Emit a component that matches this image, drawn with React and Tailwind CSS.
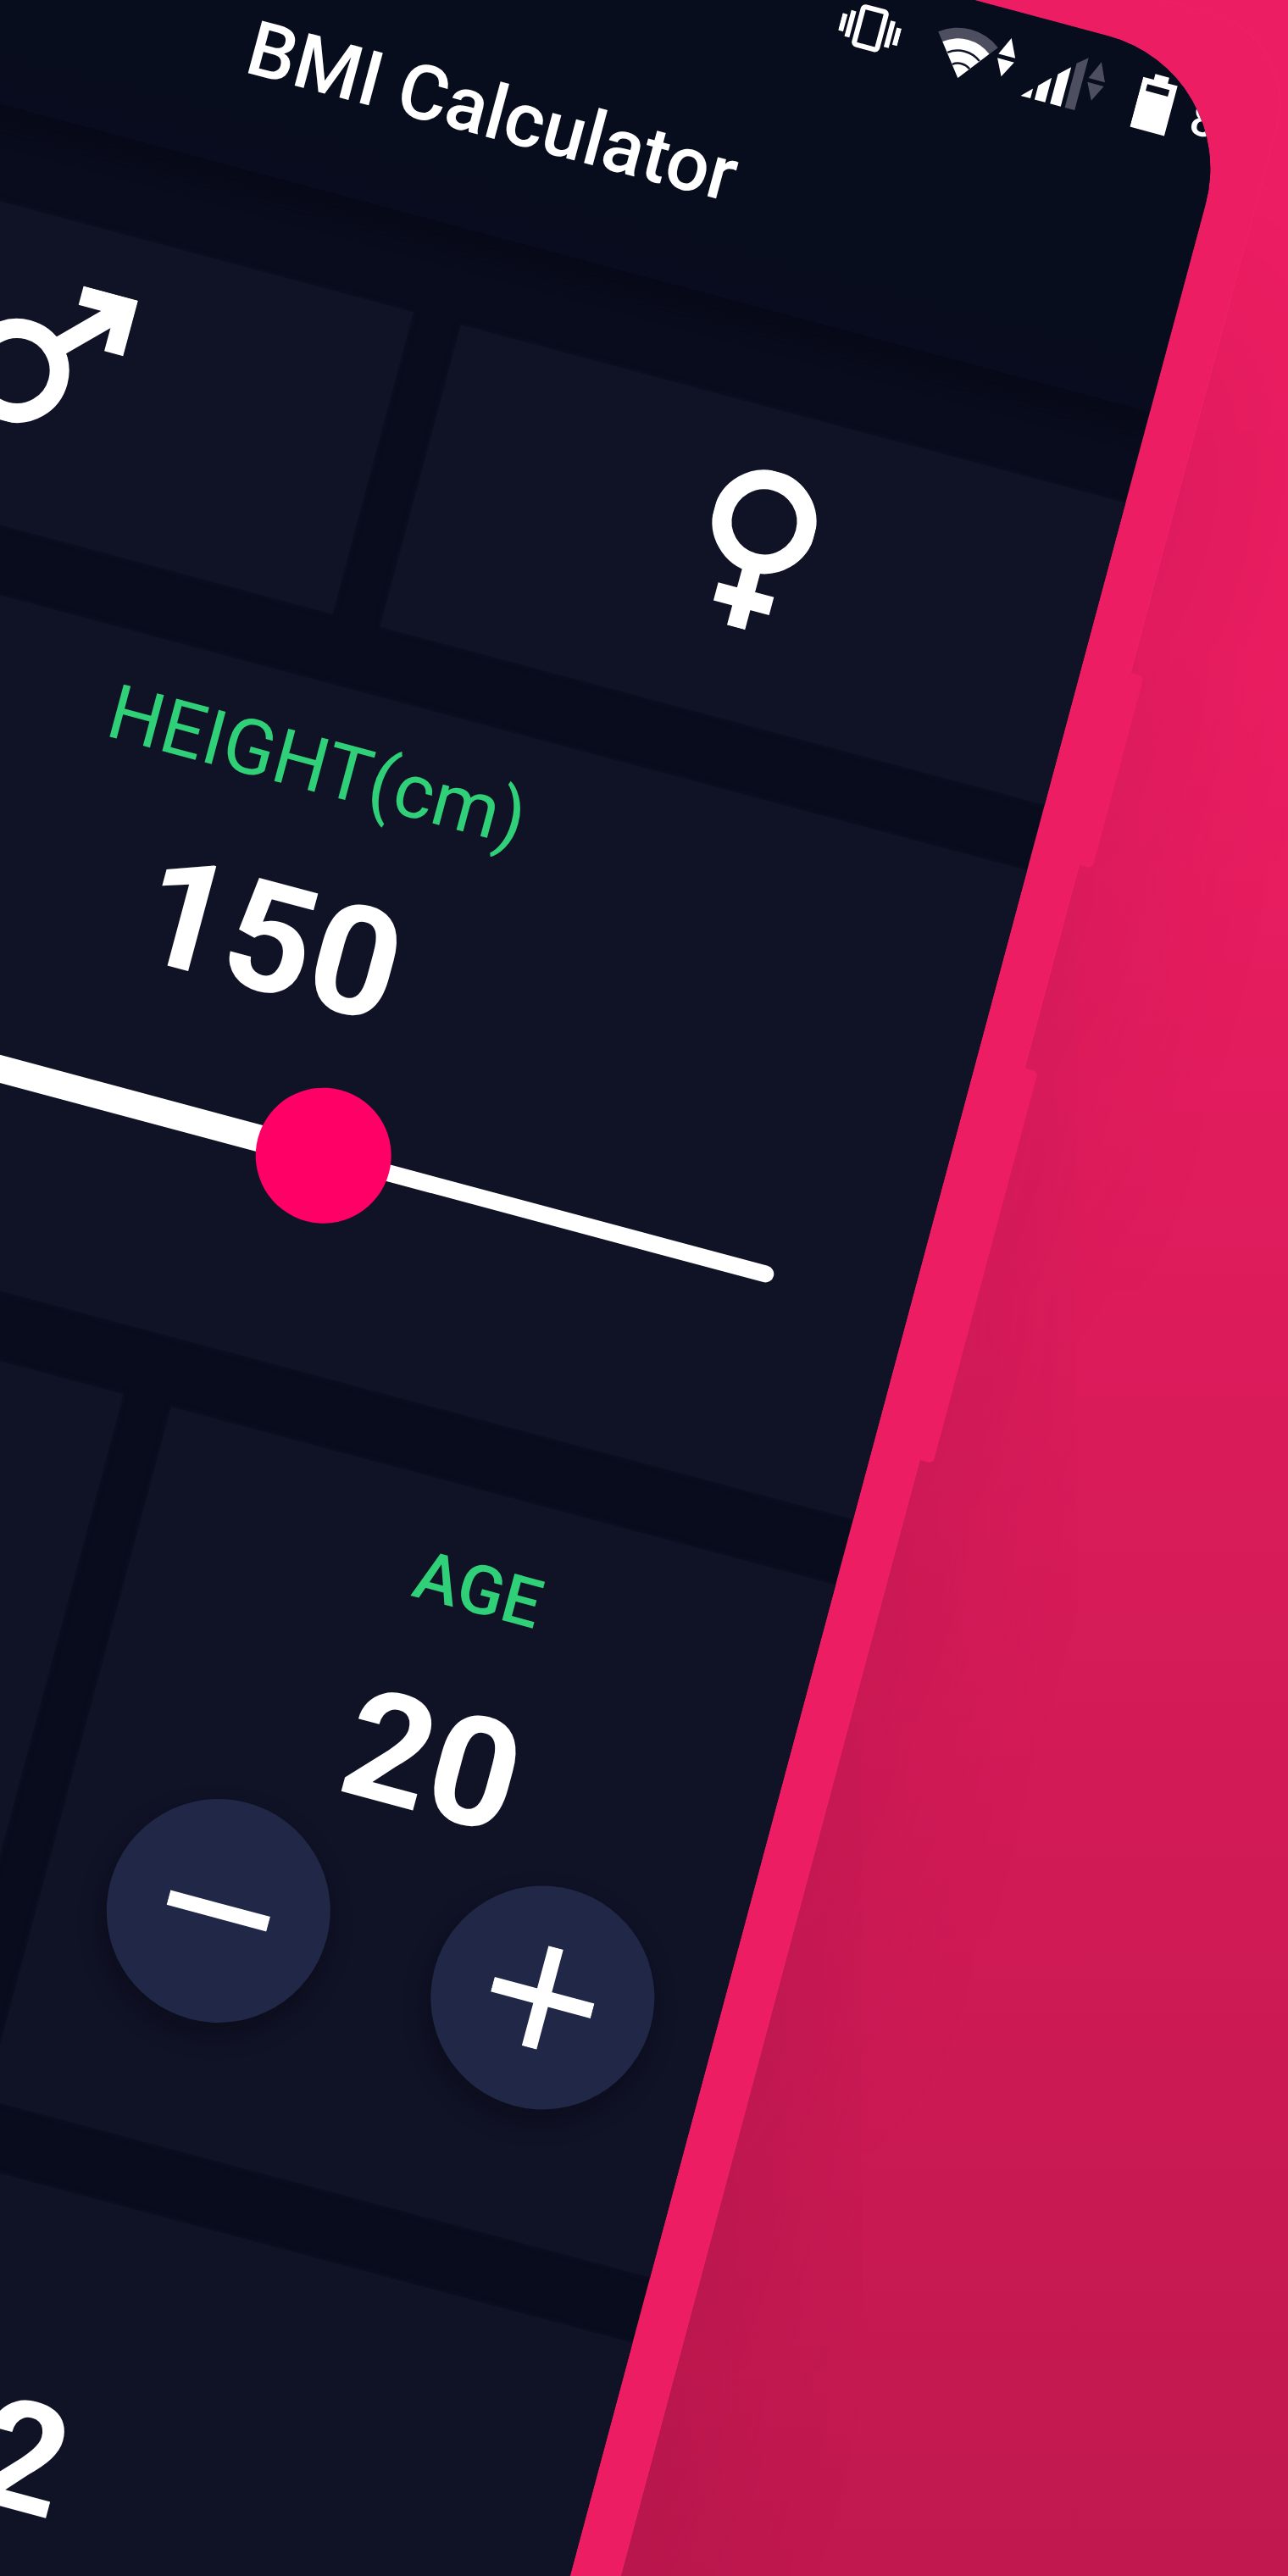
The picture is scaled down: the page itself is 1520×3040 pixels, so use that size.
import { useState } from "react";

function VibrateIcon() {
  return (
    <svg width="72" height="70" viewBox="0 0 72 70" aria-hidden="true">
      <rect x="22" y="13" width="28" height="46" rx="3" fill="none" stroke="#fff" strokeWidth="6" />
      <path d="M12 21v32M60 21v32M3 27v21M69 27v21" stroke="#fff" strokeWidth="6" fill="none" />
    </svg>
  );
}

function WifiIcon() {
  return (
    <svg width="98" height="70" viewBox="0 0 98 70" aria-hidden="true">
      <path d="M37 66 L0.5 19 A60 60 0 0 1 73.500 19 Z" fill="#4d4f60" />
      <path d="M37 66 L8.500 29 A46.500 46.500 0 0 1 65.500 29 Z" fill="#fff" />
      <path d="M17.500 40 A32.500 32.500 0 0 1 56.500 40 M26.500 52 A17.500 17.500 0 0 1 47.500 52" stroke="#12152a" strokeWidth="2.500" fill="none" />
      <path d="M86 4 L96.500 26 H76 Z M76 31 H96.500 L86 51 Z" fill="#fff" />
    </svg>
  );
}

function SignalIcon() {
  return (
    <svg width="94" height="70" viewBox="0 0 94 70" aria-hidden="true">
      <path d="M0 67 L12 55 V67 Z M17 50 L30 37 V67 H17 Z M36 31 L49 19 V67 H36 Z" fill="#fff" />
      <path d="M54 13 L66 3 V67 H54 Z M82 4 L92 26 H72 Z M72 31 H92 L82 51 Z" fill="#4d4f60" />
    </svg>
  );
}

function BatteryIcon() {
  return (
    <svg width="43" height="70" viewBox="0 0 43 70" aria-hidden="true">
      <path d="M13 1H30V8H42V69H0V8H13Z" fill="#fff" />
      <rect x="7" y="15" width="27" height="8" fill="#0a0d1c" />
    </svg>
  );
}

function MaleIcon() {
  return (
    <svg width="178" height="178" viewBox="0 0 178 178" aria-hidden="true">
      <circle cx="61" cy="117" r="50" fill="none" stroke="#fff" strokeWidth="23" />
      <path d="M98 80L160 18" stroke="#fff" strokeWidth="23" />
      <path d="M111 11.500H166V68" fill="none" stroke="#fff" strokeWidth="23" />
    </svg>
  );
}

function FemaleIcon() {
  return (
    <svg width="122" height="190" viewBox="0 0 122 190" aria-hidden="true">
      <circle cx="61" cy="61" r="50" fill="none" stroke="#fff" strokeWidth="23" />
      <path d="M61 115V190M27 155H95" stroke="#fff" strokeWidth="22" />
    </svg>
  );
}

function RoundButton({ label, onClick, plus }) {
  return (
    <button
      type="button"
      aria-label={label}
      onClick={onClick}
      className="flex size-[264px] items-center justify-center rounded-full bg-[#212747] shadow-[0_14px_28px_rgba(6,6,16,0.45)]"
    >
      <svg width="122" height="122" viewBox="0 0 122 122" aria-hidden="true">
        <path d={plus ? "M0 61H122M61 0V122" : "M0 61H122"} stroke="#fff" strokeWidth="18" />
      </svg>
    </button>
  );
}

function Counter({ label, value, onChange }) {
  return (
    <section className="flex flex-col items-center bg-[#101226] pt-[75px] pb-[154px] shadow-[0_0_6px_#101226]">
      <h2 className="text-[80px] leading-none font-medium text-[#2fd077]">{label}</h2>
      <output className="mt-20 text-[180px] leading-none font-bold">{value}</output>
      <div className="mt-[13px] flex gap-[132px]">
        <RoundButton label={`Decrease ${label}`} onClick={() => onChange(value - 1)} />
        <RoundButton label={`Increase ${label}`} onClick={() => onChange(value + 1)} plus />
      </div>
    </section>
  );
}

const MAX_HEIGHT = 253;

function HeightCard({ value, onChange }) {
  const share = `${(value / MAX_HEIGHT) * 100}%`;
  return (
    <section className="flex flex-col items-center bg-[#101226] pt-[53px] pb-[173px] shadow-[0_0_6px_#101226]">
      <label htmlFor="height" className="text-[90px] leading-none text-[#2fd077]">
        HEIGHT(cm)
      </label>
      <output htmlFor="height" className="mt-[77px] text-[180px] leading-none font-bold">
        {value}
      </output>
      <div className="relative mt-[60px] flex h-[160px] w-full items-center px-[165px]">
        <div className="h-8 rounded-l-full bg-white" style={{ width: share }} />
        <div className="h-5 flex-1 rounded-r-full bg-white" />
        <input
          id="height"
          type="range"
          min="0"
          max={MAX_HEIGHT}
          value={value}
          onChange={(e) => onChange(Number(e.target.value))}
          className="absolute inset-x-[85px] inset-y-0 appearance-none bg-transparent [&::-webkit-slider-thumb]:size-[160px] [&::-webkit-slider-thumb]:appearance-none [&::-webkit-slider-thumb]:rounded-full [&::-webkit-slider-thumb]:bg-[#ff0066]"
        />
      </div>
    </section>
  );
}

export default function App() {
  const [height, setHeight] = useState(150);
  const [weight, setWeight] = useState(50);
  const [age, setAge] = useState(20);
  const bmi = (weight / (height / 100) ** 2).toFixed(2);

  return (
    <div className="flex h-screen w-full items-start overflow-hidden bg-linear-to-b from-[#ec1d62] from-25% to-[#c0184f] font-['Roboto',sans-serif] text-white">
      <div className="relative -mt-[422px] -ml-[201px] h-[4000px] w-[1798px] shrink-0 origin-top-left rotate-[15deg] rounded-[110px] border border-[#f0226a] bg-[#ec1d62] p-[57px] shadow-[20px_380px_220px_rgba(70,10,50,0.15)]">
        <div className="absolute top-[776px] -right-[17px] h-[235px] w-[17px] rounded-r-md bg-[#ec1d62]" />
        <div className="absolute top-[1259px] -right-[17px] h-[479px] w-[17px] rounded-r-md bg-[#ec1d62]" />

        <div className="flex h-full flex-col overflow-hidden rounded-[162px] bg-[#090c1d]">
          <header className="bg-linear-to-b from-[#070d1c] from-70% to-[#090c1e] shadow-[0_22px_22px_rgba(6,8,20,0.6)]">
            <div className="flex h-[134px] items-start justify-end pt-7">
              <VibrateIcon />
              <span className="ml-[42px]"><WifiIcon /></span>
              <span className="ml-4"><SignalIcon /></span>
              <span className="ml-10"><BatteryIcon /></span>
              <span className="ml-6 w-[43px] pt-2 text-[54px] leading-[64px] font-medium">86%</span>
            </div>
            <h1 className="flex h-[282px] items-center justify-center text-[90px] leading-none font-medium">
              BMI Calculator
            </h1>
          </header>

          <main className="flex flex-1 flex-col gap-20 pt-[111px]">
            <div className="grid h-[369px] grid-cols-2 gap-[58px]">
              <button type="button" aria-label="Male" className="flex items-start justify-center bg-[#101226] pt-[71px] shadow-[0_0_6px_#101226]">
                <MaleIcon />
              </button>
              <button type="button" aria-label="Female" className="flex items-start justify-center bg-[#101226] pt-[71px] shadow-[0_0_6px_#101226]">
                <FemaleIcon />
              </button>
            </div>
            <HeightCard value={height} onChange={setHeight} />
            <div className="grid grid-cols-2 gap-[58px]">
              <Counter label="WEIGHT" value={weight} onChange={setWeight} />
              <Counter label="AGE" value={age} onChange={setAge} />
            </div>
            <section className="flex flex-1 flex-col items-center bg-[#101226] pt-[68px] shadow-[0_0_6px_#101226]">
              <h2 className="text-[80px] leading-none font-medium text-[#2fd077]">BMI</h2>
              <output className="mt-20 text-[180px] leading-none font-bold">{bmi}</output>
            </section>
          </main>
        </div>
      </div>
    </div>
  );
}
